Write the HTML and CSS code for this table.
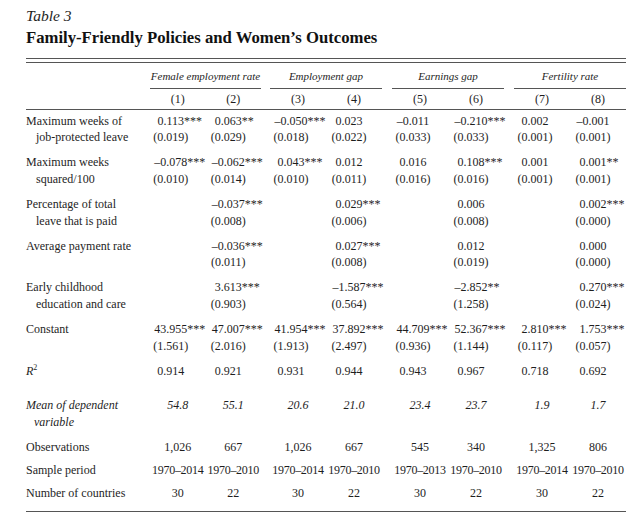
FILE: index.html
```html
<!DOCTYPE html>
<html lang="en">
<head>
<meta charset="utf-8">
<title>Table 3</title>
<link rel="stylesheet" href="styles.css">
</head>
<body>
<div class="page">
  <div class="caption">Table 3</div>
  <h1 class="title">Family-Friendly Policies and Women’s Outcomes</h1>
  <div class="table">
    <div class="double"></div>
    <div class="groups">
      <div></div>
      <div class="group">Female employment rate</div>
      <div class="group">Employment gap</div>
      <div class="group">Earnings gap</div>
      <div class="group">Fertility rate</div>
    </div>
    <div class="row nums">
      <div></div>
      <div>(1)</div><div>(2)</div><div>(3)</div><div>(4)</div>
      <div>(5)</div><div>(6)</div><div>(7)</div><div>(8)</div>
    </div>
    <div class="tbody">
      <div class="row two">
        <div class="lab"><div>Maximum weeks of</div><div class="cont">job-protected leave</div></div>
        <div><div>0.113<span class="st">***</span></div><div>(0.019)</div></div>
        <div><div>0.063<span class="st">**</span></div><div>(0.029)</div></div>
        <div><div>–0.050<span class="st">***</span></div><div>(0.018)</div></div>
        <div><div>0.023</div><div>(0.022)</div></div>
        <div><div>–0.011</div><div>(0.033)</div></div>
        <div><div>–0.210<span class="st">***</span></div><div>(0.033)</div></div>
        <div><div>0.002</div><div>(0.001)</div></div>
        <div><div>–0.001</div><div>(0.001)</div></div>
      </div>
      <div class="row two">
        <div class="lab"><div>Maximum weeks</div><div class="cont">squared/100</div></div>
        <div><div>–0.078<span class="st">***</span></div><div>(0.010)</div></div>
        <div><div>–0.062<span class="st">***</span></div><div>(0.014)</div></div>
        <div><div>0.043<span class="st">***</span></div><div>(0.010)</div></div>
        <div><div>0.012</div><div>(0.011)</div></div>
        <div><div>0.016</div><div>(0.016)</div></div>
        <div><div>0.108<span class="st">***</span></div><div>(0.016)</div></div>
        <div><div>0.001</div><div>(0.001)</div></div>
        <div><div>0.001<span class="st">**</span></div><div>(0.001)</div></div>
      </div>
      <div class="row two">
        <div class="lab"><div>Percentage of total</div><div class="cont">leave that is paid</div></div>
        <div></div>
        <div><div>–0.037<span class="st">***</span></div><div>(0.008)</div></div>
        <div></div>
        <div><div>0.029<span class="st">***</span></div><div>(0.006)</div></div>
        <div></div>
        <div><div>0.006</div><div>(0.008)</div></div>
        <div></div>
        <div><div>0.002<span class="st">***</span></div><div>(0.000)</div></div>
      </div>
      <div class="row two">
        <div class="lab"><div>Average payment rate</div></div>
        <div></div>
        <div><div>–0.036<span class="st">***</span></div><div>(0.011)</div></div>
        <div></div>
        <div><div>0.027<span class="st">***</span></div><div>(0.008)</div></div>
        <div></div>
        <div><div>0.012</div><div>(0.019)</div></div>
        <div></div>
        <div><div>0.000</div><div>(0.000)</div></div>
      </div>
      <div class="row two">
        <div class="lab"><div>Early childhood</div><div class="cont">education and care</div></div>
        <div></div>
        <div><div>3.613<span class="st">***</span></div><div>(0.903)</div></div>
        <div></div>
        <div><div>–1.587<span class="st">***</span></div><div>(0.564)</div></div>
        <div></div>
        <div><div>–2.852<span class="st">**</span></div><div>(1.258)</div></div>
        <div></div>
        <div><div>0.270<span class="st">***</span></div><div>(0.024)</div></div>
      </div>
      <div class="row two">
        <div class="lab"><div>Constant</div></div>
        <div><div>43.955<span class="st">***</span></div><div>(1.561)</div></div>
        <div><div>47.007<span class="st">***</span></div><div>(2.016)</div></div>
        <div><div>41.954<span class="st">***</span></div><div>(1.913)</div></div>
        <div><div>37.892<span class="st">***</span></div><div>(2.497)</div></div>
        <div><div>44.709<span class="st">***</span></div><div>(0.936)</div></div>
        <div><div>52.367<span class="st">***</span></div><div>(1.144)</div></div>
        <div><div>2.810<span class="st">***</span></div><div>(0.117)</div></div>
        <div><div>1.753<span class="st">***</span></div><div>(0.057)</div></div>
      </div>
      <div class="row r2">
        <div class="lab"><i>R</i><span class="sup">2</span></div>
        <div>0.914</div><div>0.921</div><div>0.931</div><div>0.944</div>
        <div>0.943</div><div>0.967</div><div>0.718</div><div>0.692</div>
      </div>
      <div class="row two ctr mean">
        <div class="lab"><div>Mean of dependent</div><div class="cont">variable</div></div>
        <div>54.8</div><div>55.1</div><div>20.6</div><div>21.0</div>
        <div>23.4</div><div>23.7</div><div>1.9</div><div>1.7</div>
      </div>
      <div class="row one ctr">
        <div class="lab">Observations</div>
        <div>1,026</div><div>667</div><div>1,026</div><div>667</div>
        <div>545</div><div>340</div><div>1,325</div><div>806</div>
      </div>
      <div class="row one ctr period">
        <div class="lab">Sample period</div>
        <div>1970–2014</div><div>1970–2010</div><div>1970–2014</div><div>1970–2010</div>
        <div>1970–2013</div><div>1970–2010</div><div>1970–2014</div><div>1970–2010</div>
      </div>
      <div class="row last ctr">
        <div class="lab">Number of countries</div>
        <div>30</div><div>22</div><div>30</div><div>22</div>
        <div>30</div><div>22</div><div>30</div><div>22</div>
      </div>
    </div>
  </div>
</div>
</body>
</html>
```

FILE: styles.css
```css
* {
  box-sizing: border-box;
  margin: 0;
  padding: 0;
}

body {
  background: #ffffff;
  color: #1e1e1e;
  font-family: "Liberation Serif", "Times New Roman", serif;
}

.page {
  width: 642px;
  padding: 6px 16px 0 26px;
}

.caption {
  font-style: italic;
  font-size: 15.5px;
  line-height: 20px;
}

.title {
  font-size: 16.7px;
  font-weight: bold;
  line-height: 20px;
  margin-top: 1.7px;
  color: #111;
}

.table {
  width: 600px;
  margin-top: 10.3px;
  font-size: 12px;
  line-height: 16.7px;
}

.double {
  height: 5px;
  border-top: 1px solid #555;
  border-bottom: 1px solid #555;
}

.groups {
  display: grid;
  grid-template-columns: 124px 111px 121px 122px 122px;
  padding-top: 5px;
}

.group {
  font-style: italic;
  font-size: 11px;
  line-height: 16px;
  text-align: center;
  padding-bottom: 4px;
  border-bottom: 1px solid #555;
}

.groups > :nth-child(3) {
  margin-left: 9px;
}

.groups > :nth-child(4),
.groups > :nth-child(5) {
  margin-left: 10px;
}

.row {
  display: grid;
  grid-template-columns: 124px 55.5px 55.5px 65px 56px 66px 56px 66px 56px;
  text-align: center;
}

.row > :nth-child(4) {
  margin-left: 9px;
}

.row > :nth-child(6),
.row > :nth-child(8) {
  margin-left: 10px;
}

.row > :nth-child(even) {
  padding-right: 14px;
}

.row > :nth-child(odd) {
  padding-right: 10px;
}

.row > .lab {
  text-align: left;
  padding-right: 0;
  white-space: nowrap;
}

.lab .cont {
  padding-left: 10px;
}

.row.ctr > :not(.lab) {
  padding-right: 0;
}

.nums {
  line-height: 17px;
  padding: 2px 0 1px;
  border-bottom: 1px solid #555;
}

.nums > :nth-child(even),
.nums > :nth-child(odd) {
  padding-right: 0;
}

.tbody {
  padding-top: 2.6px;
}

.two {
  padding-bottom: 8.3px;
}

.r2 {
  padding-bottom: 17.3px;
}

.one {
  padding-bottom: 6.6px;
}

.last {
  padding-bottom: 9.7px;
  border-bottom: 1px solid #555;
}

.mean {
  font-style: italic;
}

.mean .lab .cont {
  padding-left: 8px;
}

.period > :not(.lab) {
  letter-spacing: -0.3px;
  white-space: nowrap;
}

.st {
  display: inline-block;
  width: 0;
  white-space: nowrap;
  text-align: left;
}

.sup {
  font-size: 8px;
  line-height: 0;
  vertical-align: 5px;
}
```
